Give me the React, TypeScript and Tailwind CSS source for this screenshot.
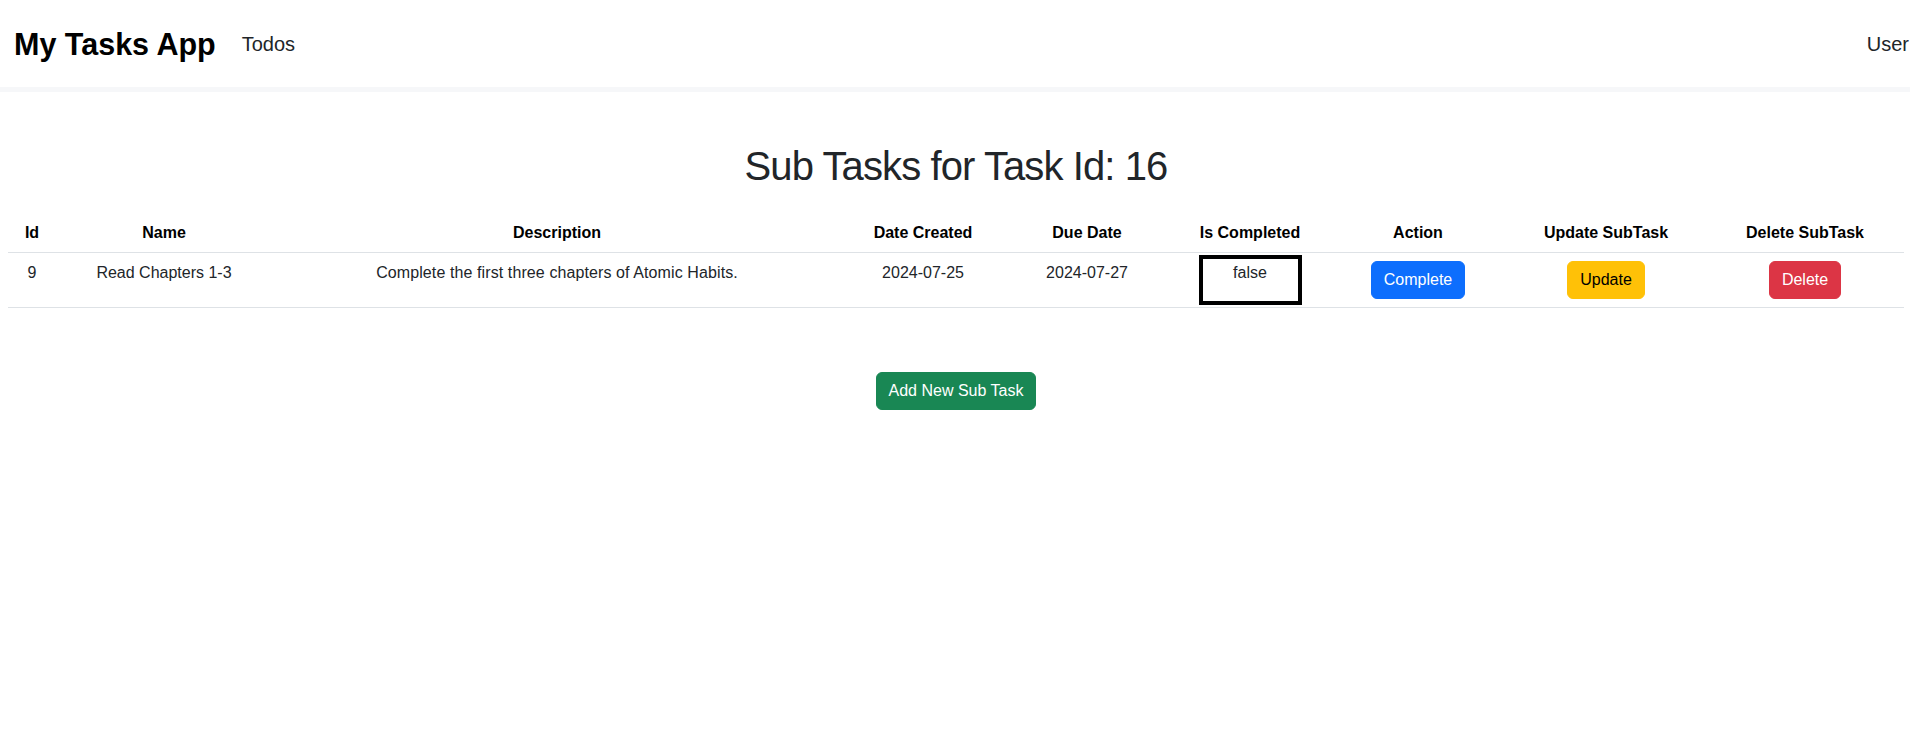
type SubTask = {
  id: number
  name: string
  description: string
  dateCreated: string
  dueDate: string
  isCompleted: boolean
}

const subTasks: SubTask[] = [
  {
    id: 9,
    name: "Read Chapters 1-3",
    description: "Complete the first three chapters of Atomic Habits.",
    dateCreated: "2024-07-25",
    dueDate: "2024-07-27",
    isCompleted: false,
  },
]

function Navbar() {
  return (
    <nav className="flex h-[92px] items-center border-b-[5px] border-[#f6f7f9] bg-white pl-[14px]">
      <a className="text-[30.5px] font-bold leading-[36px] text-black">My Tasks App</a>
      <a className="ml-[26px] text-[20px] leading-[30px] text-[#212529]">Todos</a>
      <a className="ml-auto mr-[1px] text-[20px] leading-[30px] text-[#212529]">User</a>
    </nav>
  )
}

export default function App() {
  return (
    <div className="min-h-screen bg-white font-['Liberation_Sans',Arial,sans-serif] text-[#212529]">
      <Navbar />
      <main className="pl-[8px] pr-[6px]">
        <h1 className="mt-[50px] text-center text-[40px] leading-[48px] tracking-[-0.9px] text-[#212529]">
          Sub Tasks for Task Id: 16
        </h1>
        <table className="mt-[24px] w-full table-fixed border-collapse text-center text-[16px] leading-[24px]">
          <colgroup>
            <col className="w-[48px]" />
            <col className="w-[216px]" />
            <col className="w-[570px]" />
            <col className="w-[162px]" />
            <col className="w-[166px]" />
            <col className="w-[160px]" />
            <col className="w-[176px]" />
            <col className="w-[200px]" />
            <col />
          </colgroup>
          <thead>
            <tr className="border-b border-[#dee2e6] text-black">
              <th className="px-2 py-[7px] font-bold">Id</th>
              <th className="px-2 py-[7px] font-bold">Name</th>
              <th className="px-2 py-[7px] font-bold">Description</th>
              <th className="px-2 py-[7px] font-bold">Date Created</th>
              <th className="px-2 py-[7px] font-bold">Due Date</th>
              <th className="px-2 py-[7px] font-bold">Is Completed</th>
              <th className="px-2 py-[7px] font-bold">Action</th>
              <th className="px-2 py-[7px] font-bold">Update SubTask</th>
              <th className="px-2 py-[7px] font-bold">Delete SubTask</th>
            </tr>
          </thead>
          <tbody>
            {subTasks.map((t) => (
              <tr key={t.id} className="border-b border-[#dee2e6] align-top">
                <td className="p-2">{t.id}</td>
                <td className="p-2">{t.name}</td>
                <td className="p-2 tracking-[0.1px]">{t.description}</td>
                <td className="p-2">{t.dateCreated}</td>
                <td className="p-2">{t.dueDate}</td>
                <td className="px-2 py-[2px]">
                  <div className="mx-auto h-[50px] w-[103px] border-4 border-black pt-[2px]">
                    {String(t.isCompleted)}
                  </div>
                </td>
                <td className="p-2">
                  <button className="rounded-[6px] border border-[#0d6efd] bg-[#0d6efd] px-3 py-[6px] text-white">
                    Complete
                  </button>
                </td>
                <td className="p-2">
                  <button className="rounded-[6px] border border-[#ffc107] bg-[#ffc107] px-3 py-[6px] text-black">
                    Update
                  </button>
                </td>
                <td className="p-2">
                  <button className="rounded-[6px] border border-[#dc3545] bg-[#dc3545] px-3 py-[6px] text-white">
                    Delete
                  </button>
                </td>
              </tr>
            ))}
          </tbody>
        </table>
        <div className="mt-[64px] flex justify-center">
          <button className="rounded-[6px] border border-[#198754] bg-[#198754] px-3 py-[6px] text-[16px] leading-[24px] text-white">
            Add New Sub Task
          </button>
        </div>
      </main>
    </div>
  )
}
